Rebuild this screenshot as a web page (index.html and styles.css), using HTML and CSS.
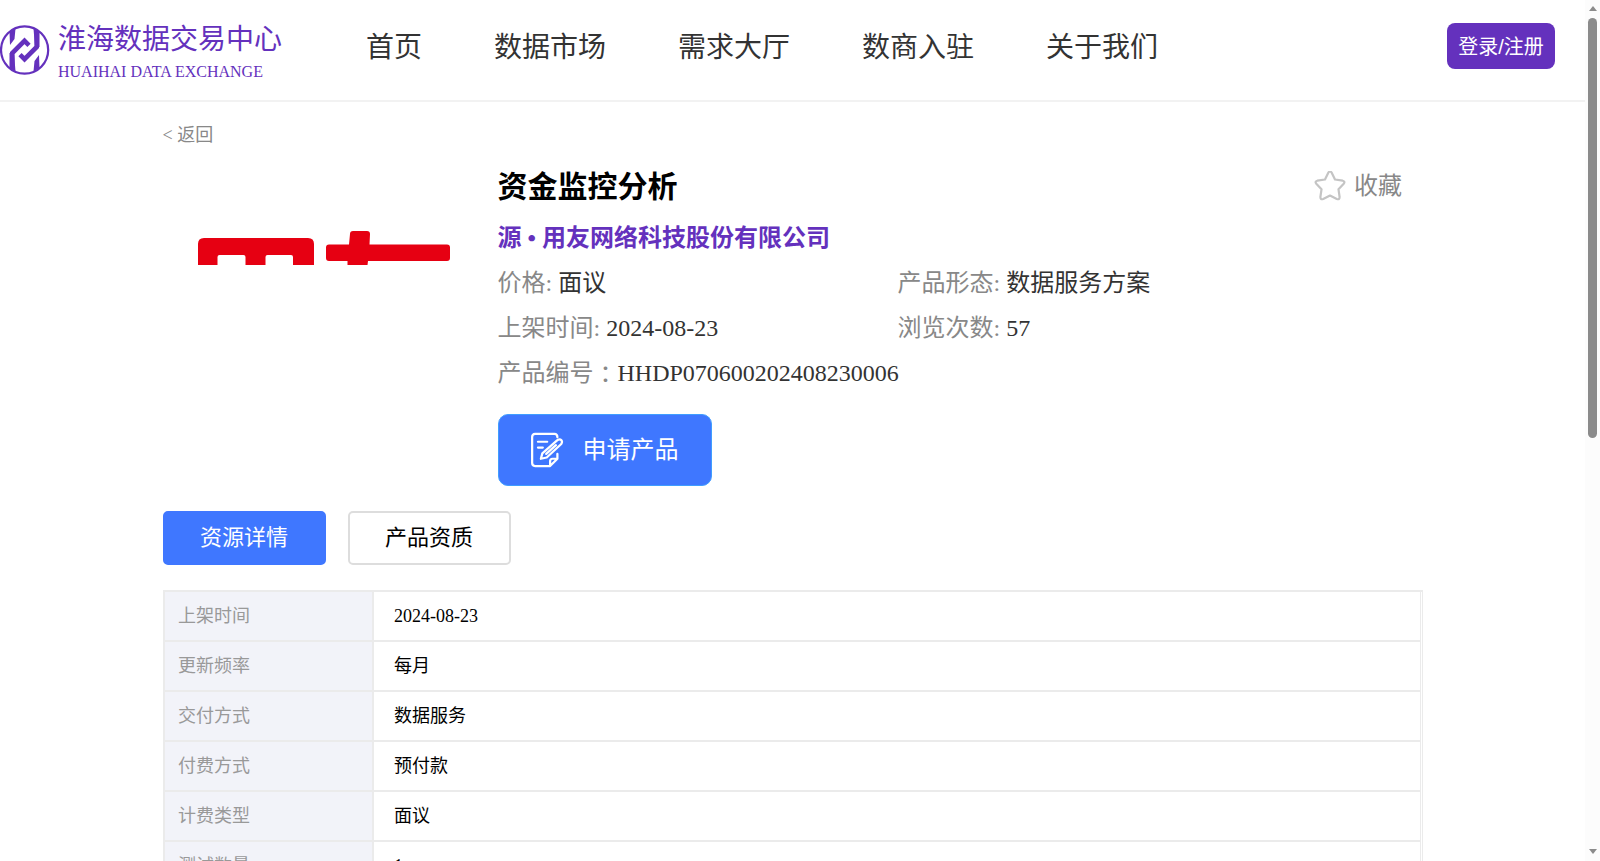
FILE: index.html
```html
<!DOCTYPE html>
<html lang="zh-CN">

<head>
    <meta charset="UTF-8">
    <meta name="viewport" content="width=device-width, initial-scale=1.0">
    <link rel="stylesheet" href="styles.css">
    <title>淮海数据交易中心</title>
</head>

<body>
    <div class="page">
        <div class="header">
            <svg class="logo" viewBox="0 0 50 50">
                <circle cx="24.6" cy="25" r="23.6" fill="none" stroke="#6431bd" stroke-width="2.2"/>
                <path fill="#6431bd" d="M9.500 7L15.500 3.500L14.500 14L10 20ZM39.500 43L33.500 46.500L34.500 36L39 30Z"/>
                <path fill="none" stroke="#6431bd" stroke-width="4.6" d="M12.300 44.500V28L24.500 15.800L29 20.300M36.700 5.500V22L24.500 34.200L20 29.700"/>
                <path fill="#6431bd" d="M9.500 28V43L15.500 46.500L14 28ZM39.500 22V7L33.500 3.500L35 22Z"/>
            </svg>
            <div class="brand">
                <div class="brand-cn">淮海数据交易中心</div>
                <div class="brand-en">HUAIHAI DATA EXCHANGE</div>
            </div>
            <div class="nav">
                <span>首页</span>
                <span>数据市场</span>
                <span>需求大厅</span>
                <span>数商入驻</span>
                <span>关于我们</span>
            </div>
            <div class="login">登录/注册</div>
        </div>

        <div class="main">
            <div class="back">&lt; 返回</div>

            <div class="product">
                <div class="cover">
                    <svg width="300" height="105" viewBox="0 0 300 105">
                        <path fill="#e60012" d="M35 105V84q0-6 6-6h104q6 0 6 6V105H130V97q0-2-2-2H104.500q-2 0-2 2V105H82.500V97q0-2-2-2H56.500q-2 0-2 2V105Z"/>
                        <path fill="#e60012" d="M166 84.500H186L187 74q0-3 3-3H204q3 0 3 3L206.500 84.500H284q3 0 3 3V98q0 3-3 3H205L204.500 105H184.500V101H166q-3 0-3-3V87.500q0-3 3-3Z"/>
                    </svg>
                </div>
                <div class="info">
                    <div class="title-row">
                        <h1>资金监控分析</h1>
                        <div class="collect">
                            <svg width="32" height="32" viewBox="0 0 32 32">
                                <path fill="none" stroke="#c4c4c4" stroke-width="2.2" stroke-linejoin="round" d="M14.300 1.700q1.700-2.400 3.400 0L21 8.500L28.700 9.700q2.800.8 1 3L24.500 18.300L25.600 26q0 3-2.800 2L16 24.500L9.200 28q-2.800 1-2.800-2L7.500 18.300L2.300 12.700q-1.800-2.200 1-3L11 8.500Z"/>
                            </svg>
                            <span>收藏</span>
                        </div>
                    </div>
                    <div class="company">源 • 用友网络科技股份有限公司</div>
                    <div class="attrs">
                        <div><label>价格: </label>面议</div>
                        <div><label>产品形态: </label>数据服务方案</div>
                        <div><label>上架时间: </label>2024-08-23</div>
                        <div><label>浏览次数: </label>57</div>
                        <div class="wide"><label>产品编号<span class="colon" lang="zh-TW">：</span></label>HHDP070600202408230006</div>
                    </div>
                    <div class="apply">
                        <svg width="34" height="36" viewBox="-0.7 -0.5 35 37" fill="none" stroke="#fff" stroke-width="2.300" stroke-linecap="round" stroke-linejoin="round">
                            <path d="M27.500 5V4.500q0-3-3-3H4.500q-3 0-3 3V31.500q0 3 3 3H20L27.500 27V22M20 34V29.500q0-2.500 2.500-2.500H27"/>
                            <path d="M7.500 9.500H17M7.500 15.500H12.500"/>
                            <path d="M10.500 27L12 21.500L27.500 7.800q2.500-1.500 4 0t0 4L16.500 25.700ZM16 22L26 13"/>
                        </svg>
                        <span>申请产品</span>
                    </div>
                </div>
            </div>

            <div class="tabs">
                <div class="tab active">资源详情</div>
                <div class="tab">产品资质</div>
            </div>

            <div class="detail">
                <div class="row"><div class="name">上架时间</div><div class="value">2024-08-23</div></div>
                <div class="row"><div class="name">更新频率</div><div class="value">每月</div></div>
                <div class="row"><div class="name">交付方式</div><div class="value">数据服务</div></div>
                <div class="row"><div class="name">付费方式</div><div class="value">预付款</div></div>
                <div class="row"><div class="name">计费类型</div><div class="value">面议</div></div>
                <div class="row"><div class="name">测试数量</div><div class="value">1</div></div>
            </div>
        </div>
    </div>

    <div class="scrollbar">
        <div class="arrow-up"></div>
        <div class="thumb"></div>
        <div class="arrow-down"></div>
    </div>
</body>

</html>
```
FILE: styles.css
```css
* {
    box-sizing: border-box;
}

body {
    margin: 0;
    height: 861px;
    display: flex;
    overflow: hidden;
    background: #fff;
    font-family: "Liberation Serif", "Noto Sans CJK SC", serif;
}

svg {
    display: block;
    flex-shrink: 0;
}

.page {
    width: 1585px;
    height: 861px;
    overflow: hidden;
}

.header {
    display: flex;
    height: 102px;
    border-bottom: 2px solid #f2f2f2;
}

.logo {
    width: 50px;
    height: 50px;
    margin-top: 25px;
}

.brand {
    width: 308px;
    margin-left: 8px;
    padding-top: 19px;
    color: #6431bd;
    white-space: nowrap;
}

.brand-cn {
    font-size: 28px;
    line-height: 42px;
}

.brand-en {
    font-size: 16px;
    line-height: 22px;
}

.nav {
    display: flex;
    gap: 72px;
    padding-top: 27px;
    font-size: 28px;
    line-height: 42px;
    color: #333;
}

.login {
    width: 108px;
    height: 46px;
    margin: 23px 30px 0 auto;
    border-radius: 8px;
    background: #6431bd;
    color: #fff;
    font-family: "Liberation Sans", "Noto Sans CJK SC", sans-serif;
    font-size: 20px;
    line-height: 48px;
    text-align: center;
}

.main {
    width: 1260px;
    margin-left: 163px;
}

.back {
    padding-top: 21px;
    font-size: 18px;
    line-height: 24px;
    color: #888;
    text-indent: -0.5px;
}

.product {
    display: flex;
    height: 340px;
    margin-top: 13px;
}

.cover {
    width: 334.5px;
}

.info {
    flex: 1;
}

.title-row {
    display: flex;
    justify-content: space-between;
    align-items: center;
    height: 53px;
    padding-right: 21px;
}

h1 {
    margin: 0;
    font-size: 30px;
    line-height: 53px;
}

.collect {
    display: flex;
    align-items: center;
    gap: 8px;
    font-size: 24px;
    line-height: 30px;
    color: #888;
}

.collect span,
.apply span {
    margin-top: -1px;
}

.company {
    padding-top: 1px;
    font-size: 24px;
    font-weight: bold;
    line-height: 48px;
    color: #6431bd;
}

.attrs {
    display: grid;
    grid-template-columns: 400px 1fr;
    margin-top: -1px;
    font-size: 24px;
    line-height: 45px;
    color: #333;
}

.attrs label {
    color: #888;
}

.attrs .wide {
    grid-column: span 2;
}

/* full-width colon sits in the middle of its cell */
.colon {
    font-family: "Noto Sans CJK TC", sans-serif;
    line-height: 1;
    vertical-align: -2px;
}

.apply {
    display: flex;
    align-items: center;
    gap: 19px;
    width: 214px;
    height: 72px;
    margin: 18px 0 0 0.5px;
    padding-left: 30.5px;
    border: 1px solid #409eff;
    border-radius: 10px;
    background: #3f77ff;
    color: #fff;
    font-size: 24px;
    line-height: 30px;
}

.tabs {
    display: flex;
    gap: 22px;
    margin-top: 11px;
}

.tab {
    width: 163px;
    height: 54px;
    border: 2px solid #ddd;
    border-radius: 5px;
    font-size: 22px;
    line-height: 50px;
    text-align: center;
    text-indent: -1px;
}

.tab.active {
    border-color: #3f77ff;
    background: #3f77ff;
    color: #fff;
}

.detail {
    margin-top: 25px;
    padding-right: 1px;
    border: 2px solid #ebebeb;
    border-right-width: 1px;
    border-bottom: 0;
    font-size: 18px;
}

.row {
    display: flex;
    height: 50px;
    border-right: 1px solid #ebebeb;
    border-bottom: 2px solid #ebebeb;
    line-height: 49px;
}

.name {
    width: 209px;
    height: 48px;
    padding-left: 13px;
    border-right: 2px solid #ebebeb;
    background: #f2f3f9;
    color: #999;
}

.value {
    padding-left: 20px;
}

.scrollbar {
    display: flex;
    flex-direction: column;
    align-items: center;
    width: 15px;
    height: 861px;
    padding: 6px 0 7px;
    background: #fcfcfc;
}

.arrow-up,
.arrow-down {
    border: 4.5px solid transparent;
}

.arrow-up {
    border-top: 0;
    border-bottom: 5px solid #8b8b8b;
}

.arrow-down {
    margin-top: auto;
    border-bottom: 0;
    border-top: 5px solid #8b8b8b;
}

.thumb {
    width: 9px;
    height: 420px;
    margin-top: 7px;
    border-radius: 5px;
    background: #8b8b8b;
}
```
